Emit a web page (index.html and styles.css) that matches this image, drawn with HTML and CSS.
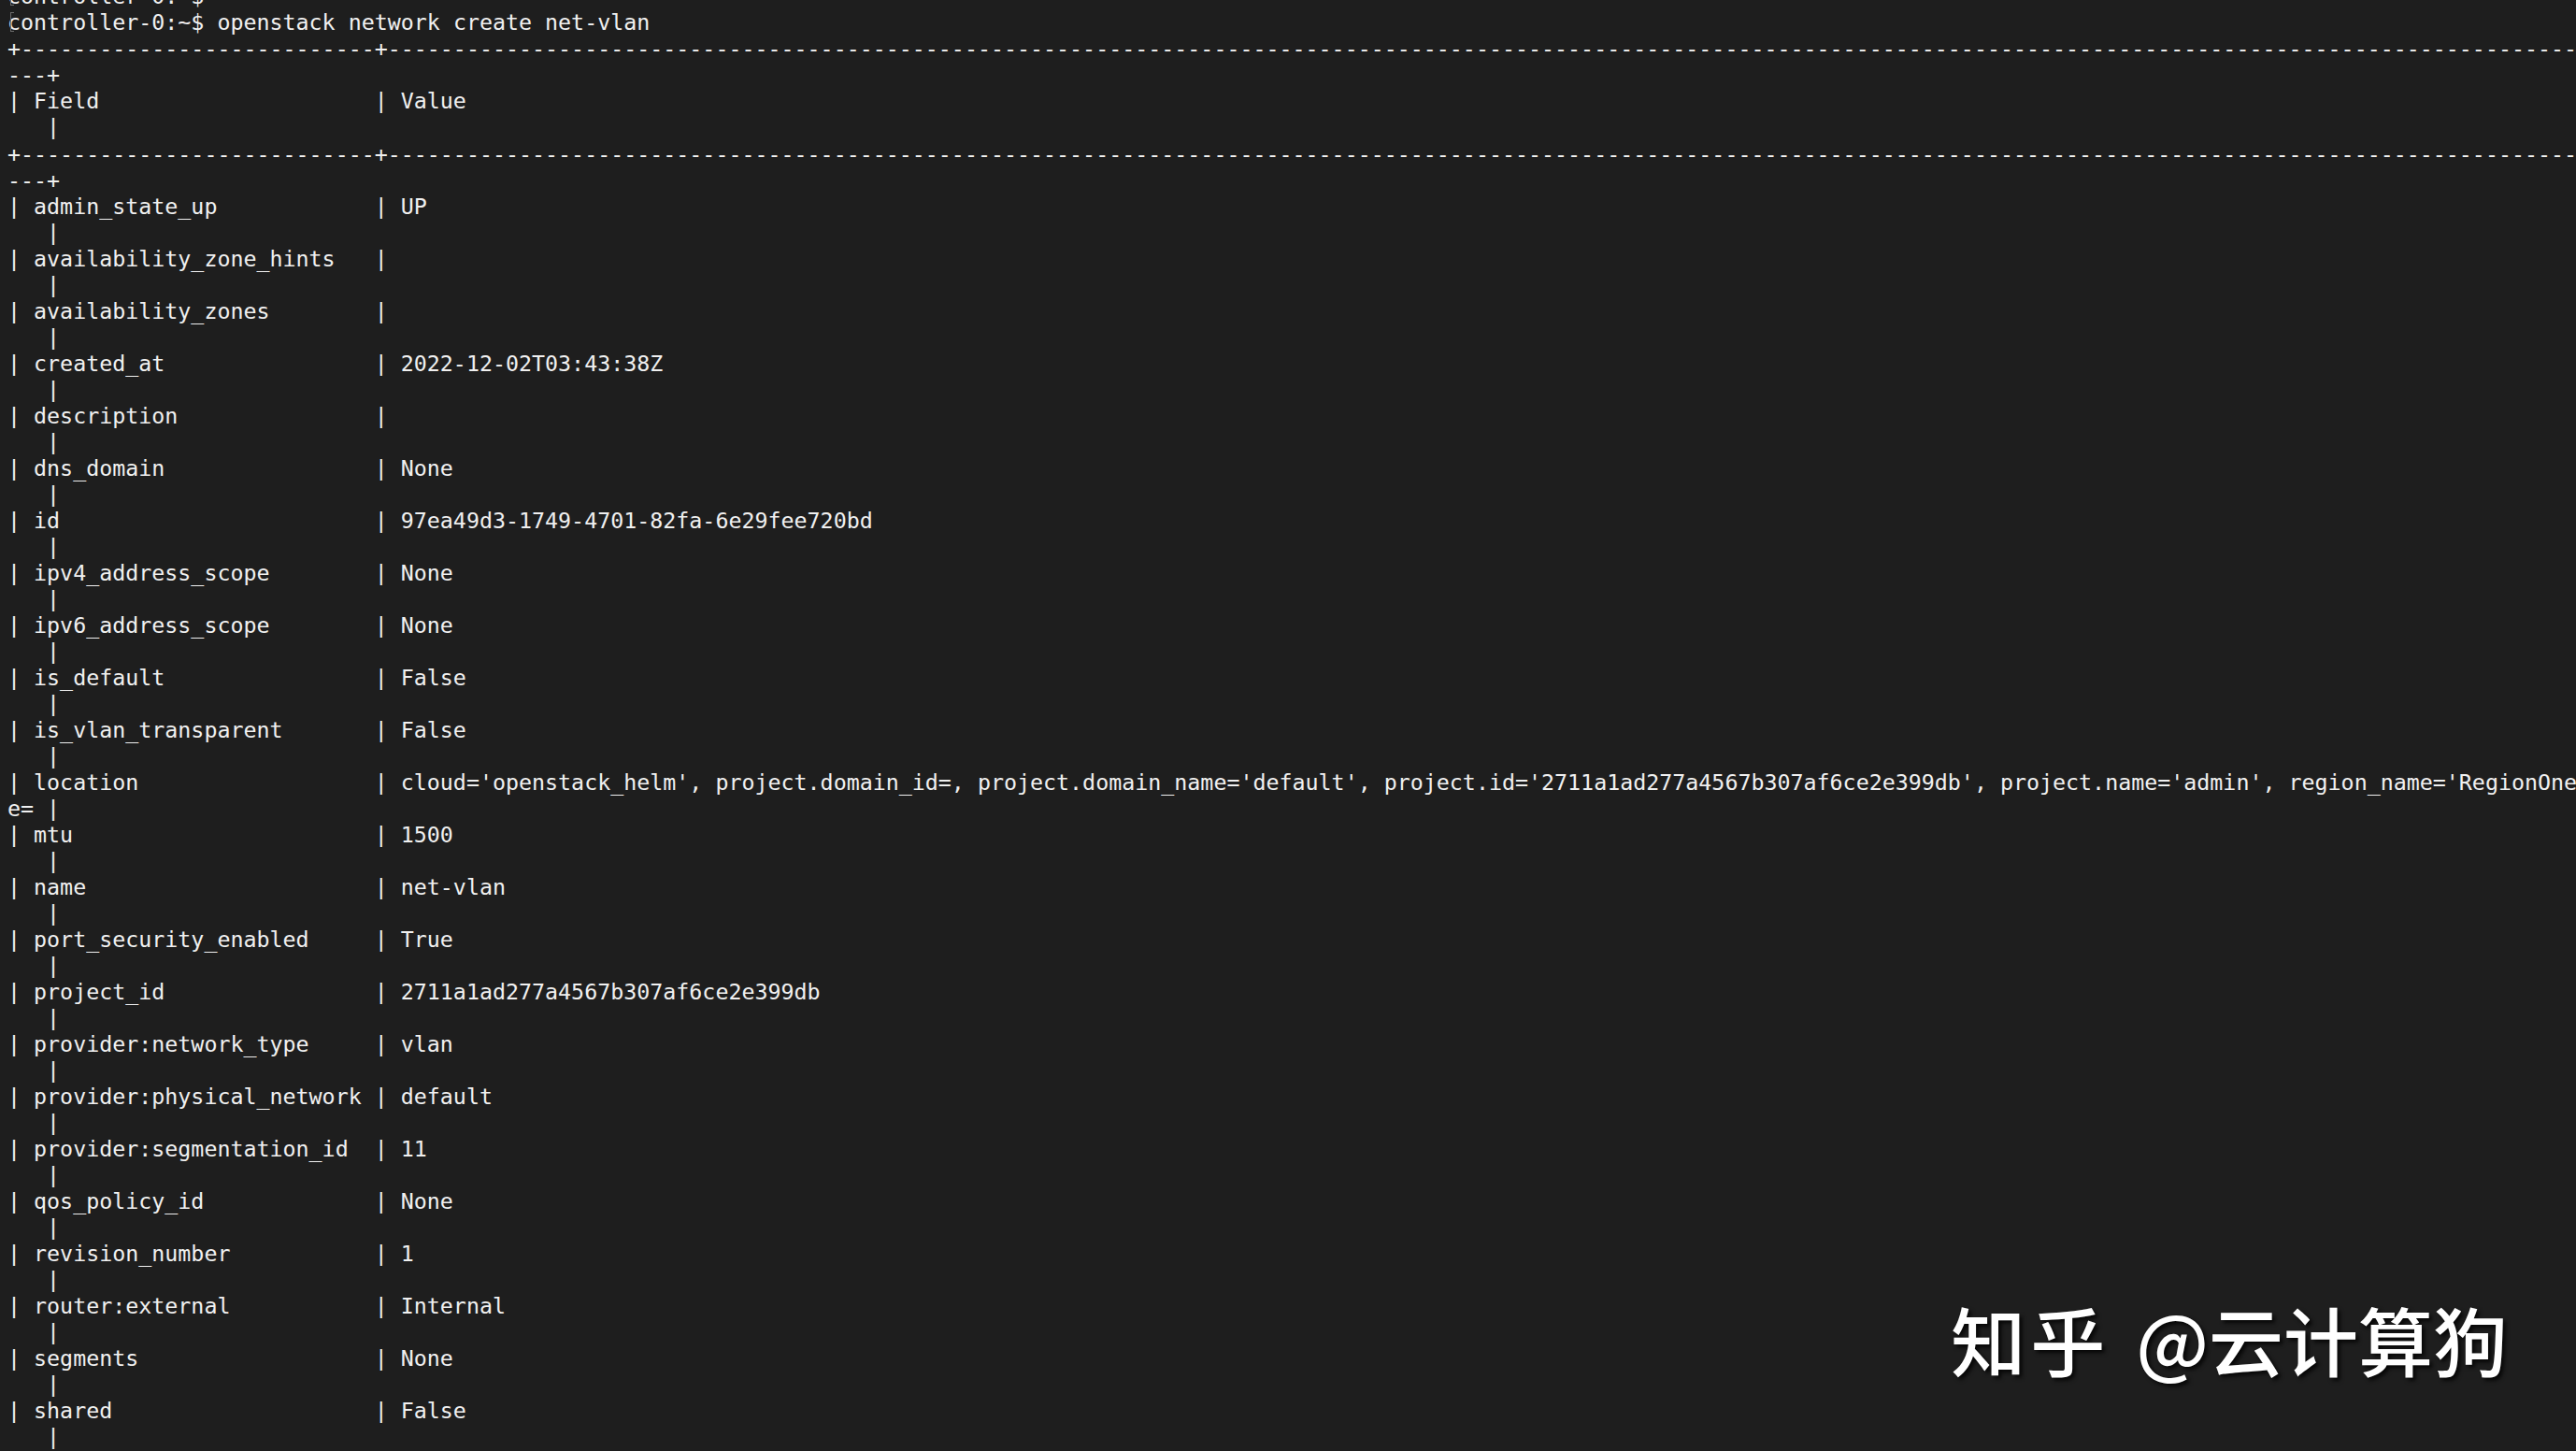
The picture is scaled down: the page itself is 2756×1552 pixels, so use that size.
FILE: index.html
```html
<!DOCTYPE html>
<html lang="en">

<head>
  <meta charset="UTF-8">
  <meta name="viewport" content="width=device-width, initial-scale=1.0">
  <title>controller-0 terminal</title>
  <link rel="stylesheet" href="styles.css">
</head>

<body>
  <div class="screen">
    <div class="term">
      <div class="ln mark">controller-0:~$</div>
      <div class="ln mark">controller-0:~$ openstack network create net-vlan</div>
      <div class="ln"><span class="col">+---------------------------</span>+--------------------------------------------------------------------------------------------------------------------------------------------------------------------------------------------------------</div>
      <div class="ln">---+</div>
      <div class="ln"><span class="col">| Field</span>| Value</div>
      <div class="ln">   |</div>
      <div class="ln"><span class="col">+---------------------------</span>+--------------------------------------------------------------------------------------------------------------------------------------------------------------------------------------------------------</div>
      <div class="ln">---+</div>

      <div class="ln"><span class="col">| admin_state_up</span>| UP</div>
      <div class="ln">   |</div>
      <div class="ln"><span class="col">| availability_zone_hints</span>|</div>
      <div class="ln">   |</div>
      <div class="ln"><span class="col">| availability_zones</span>|</div>
      <div class="ln">   |</div>
      <div class="ln"><span class="col">| created_at</span>| 2022-12-02T03:43:38Z</div>
      <div class="ln">   |</div>
      <div class="ln"><span class="col">| description</span>|</div>
      <div class="ln">   |</div>
      <div class="ln"><span class="col">| dns_domain</span>| None</div>
      <div class="ln">   |</div>
      <div class="ln"><span class="col">| id</span>| 97ea49d3-1749-4701-82fa-6e29fee720bd</div>
      <div class="ln">   |</div>
      <div class="ln"><span class="col">| ipv4_address_scope</span>| None</div>
      <div class="ln">   |</div>
      <div class="ln"><span class="col">| ipv6_address_scope</span>| None</div>
      <div class="ln">   |</div>
      <div class="ln"><span class="col">| is_default</span>| False</div>
      <div class="ln">   |</div>
      <div class="ln"><span class="col">| is_vlan_transparent</span>| False</div>
      <div class="ln">   |</div>
      <div class="ln"><span class="col">| location</span>| cloud='openstack_helm', project.domain_id=, project.domain_name='default', project.id='2711a1ad277a4567b307af6ce2e399db', project.name='admin', region_name='RegionOne', zon</div>
      <div class="ln">e= |</div>
      <div class="ln"><span class="col">| mtu</span>| 1500</div>
      <div class="ln">   |</div>
      <div class="ln"><span class="col">| name</span>| net-vlan</div>
      <div class="ln">   |</div>
      <div class="ln"><span class="col">| port_security_enabled</span>| True</div>
      <div class="ln">   |</div>
      <div class="ln"><span class="col">| project_id</span>| 2711a1ad277a4567b307af6ce2e399db</div>
      <div class="ln">   |</div>
      <div class="ln"><span class="col">| provider:network_type</span>| vlan</div>
      <div class="ln">   |</div>
      <div class="ln"><span class="col">| provider:physical_network</span>| default</div>
      <div class="ln">   |</div>
      <div class="ln"><span class="col">| provider:segmentation_id</span>| 11</div>
      <div class="ln">   |</div>
      <div class="ln"><span class="col">| qos_policy_id</span>| None</div>
      <div class="ln">   |</div>
      <div class="ln"><span class="col">| revision_number</span>| 1</div>
      <div class="ln">   |</div>
      <div class="ln"><span class="col">| router:external</span>| Internal</div>
      <div class="ln">   |</div>
      <div class="ln"><span class="col">| segments</span>| None</div>
      <div class="ln">   |</div>
      <div class="ln"><span class="col">| shared</span>| False</div>
      <div class="ln">   |</div>
    </div>
  </div>

  <div class="watermark"><span class="brand">知乎</span> @云计算狗</div>
</body>

</html>
```

FILE: styles.css
```css
/* Page */
html,
body {
  margin: 0;
  height: 100%;
  background-color: #1e1e1e;
}

.screen {
  height: 100vh;
  overflow: hidden;
}

/* Terminal text */
.term {
  margin-top: -17.6px;
  padding-left: 8px;
  font-family: "DejaVu Sans Mono", monospace;
  font-size: 23.3px;
  line-height: 28.02px;
  color: #f0f0f0;
}

.ln {
  white-space: pre;
  position: relative;
}

.col {
  display: inline-block;
  width: 28ch;
}

/* prompt marks in the left gutter */
.mark::before {
  content: "";
  position: absolute;
  left: 3px;
  top: 3px;
  width: 3px;
  height: 19px;
  border: 1.5px solid #6b6b6b;
  border-right: none;
}

/* Watermark */
.watermark {
  position: absolute;
  right: 73px;
  bottom: 81px;
  font-family: "Noto Sans CJK SC", sans-serif;
  font-size: 80px;
  font-weight: 500;
  line-height: 1;
  color: #ffffff;
  white-space: pre;
  word-spacing: 10px;
  text-shadow: 3px 3px 4px rgba(0, 0, 0, 0.8);
}

.brand {
  letter-spacing: 5px;
}
```
